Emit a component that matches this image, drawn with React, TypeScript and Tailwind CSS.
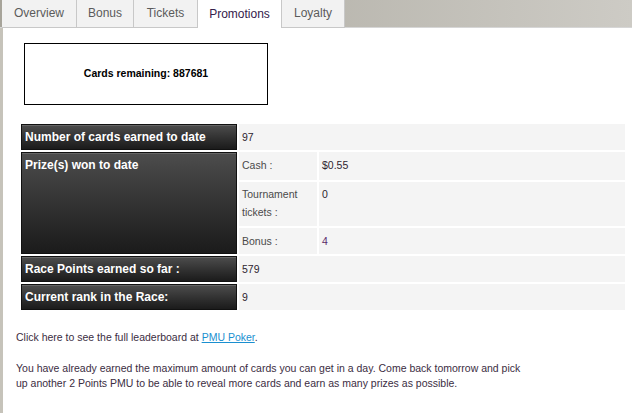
import React from "react";

const tabs = ["Overview", "Bonus", "Tickets", "Promotions", "Loyalty"];
const tabW = [75, 57, 64, 84, 63];

export default function App() {
  return (
    <div className="w-[632px] h-[413px] bg-white overflow-hidden font-['Liberation_Sans',Arial,sans-serif] text-[#3b2d3f]">
      <div className="flex h-[28px] pl-[2px] bg-gradient-to-r from-[#a7a49a] to-[#cdcbc5] border-b border-[#d6d6d6]">
        {tabs.map((t, i) => {
          const active = t === "Promotions";
          return (
            <div
              key={t}
              style={{ width: tabW[i] }}
              className={
                "flex items-center justify-center text-[12px] h-[28px] border-r border-[#c8c8c8] " +
                (active
                  ? "bg-white text-[#35204a]"
                  : "bg-[#f2f2f2] text-[#5b5b5b] border-b border-b-[#c8c8c8]")
              }
            >
              <span className="-mt-[1px]">{t}</span>
            </div>
          );
        })}
      </div>
      <div className="flex h-[385px]">
        <div className="w-[3px] bg-[#c6c3ba]" />
        <div className="flex-1 flex flex-col">
          <div className="ml-[21px] mt-[15px] w-[244px] h-[62px] border border-black flex items-center justify-center text-[10.5px] font-bold text-black">
            Cards remaining: 887681
          </div>
          <table className="ml-[16px] mt-[17px] border-separate border-spacing-[2px] table-fixed w-[608px] text-[10.5px] leading-[18px]">
            <colgroup>
              <col style={{ width: 216 }} />
              <col style={{ width: 78 }} />
              <col style={{ width: 306 }} />
            </colgroup>
            <tbody>
              <tr>
                <Th>Number of cards earned to date</Th>
                <td colSpan={2} className="bg-[#f4f4f4] h-[26px] align-top pt-[4px] pl-[3px] text-[#2e2430]">97</td>
              </tr>
              <tr>
                <Th rowSpan={3}>Prize(s) won to date</Th>
                <td className="bg-[#f4f4f4] h-[28px] align-top pt-[4px] pl-[3px] text-[#4a4a4a]">Cash :</td>
                <td className="bg-[#f4f4f4] h-[28px] align-top pt-[4px] pl-[3px] text-[#2e2430]">$0.55</td>
              </tr>
              <tr>
                <td className="bg-[#f4f4f4] h-[44px] align-top pt-[3px] pl-[3px] text-[#4a4a4a]">Tournament tickets :</td>
                <td className="bg-[#f4f4f4] h-[44px] align-top pt-[3px] pl-[3px] text-[#2e2430]">0</td>
              </tr>
              <tr>
                <td className="bg-[#f4f4f4] h-[26px] align-top pt-[4px] pl-[3px] text-[#4a4a4a]">Bonus :</td>
                <td className="bg-[#f4f4f4] h-[26px] align-top pt-[4px] pl-[3px] text-[#5a2a6a]">4</td>
              </tr>
              <tr>
                <Th>Race Points earned so far :</Th>
                <td colSpan={2} className="bg-[#f4f4f4] h-[26px] align-top pt-[4px] pl-[3px] text-[#2e2430]">579</td>
              </tr>
              <tr>
                <Th>Current rank in the Race:</Th>
                <td colSpan={2} className="bg-[#f4f4f4] h-[26px] align-top pt-[4px] pl-[3px] text-[#2e2430]">9</td>
              </tr>
            </tbody>
          </table>
          <div className="ml-[13px] mt-[18px] w-[510px] text-[10.5px] leading-[15px]">
            <p>
              Click here to see the full leaderboard at{" "}
              <a className="text-[#1a8fd0] underline">PMU Poker</a>.
            </p>
            <p className="mt-[16px]">
              You have already earned the maximum amount of cards you can get in a day. Come back tomorrow and pick up
              another 2 Points PMU to be able to reveal more cards and earn as many prizes as possible.
            </p>
          </div>
        </div>
      </div>
    </div>
  );
}

function Th({ children, rowSpan }: { children: React.ReactNode; rowSpan?: number }) {
  return (
    <td
      rowSpan={rowSpan}
      className="h-[26px] align-top pt-[3px] pl-[3px] border border-[#111] bg-gradient-to-b from-[#4d4d4d] to-[#1b1b1b] text-white font-bold text-[12px] leading-[18px] shadow-[inset_0_1px_0_#666]"
    >
      {children}
    </td>
  );
}
